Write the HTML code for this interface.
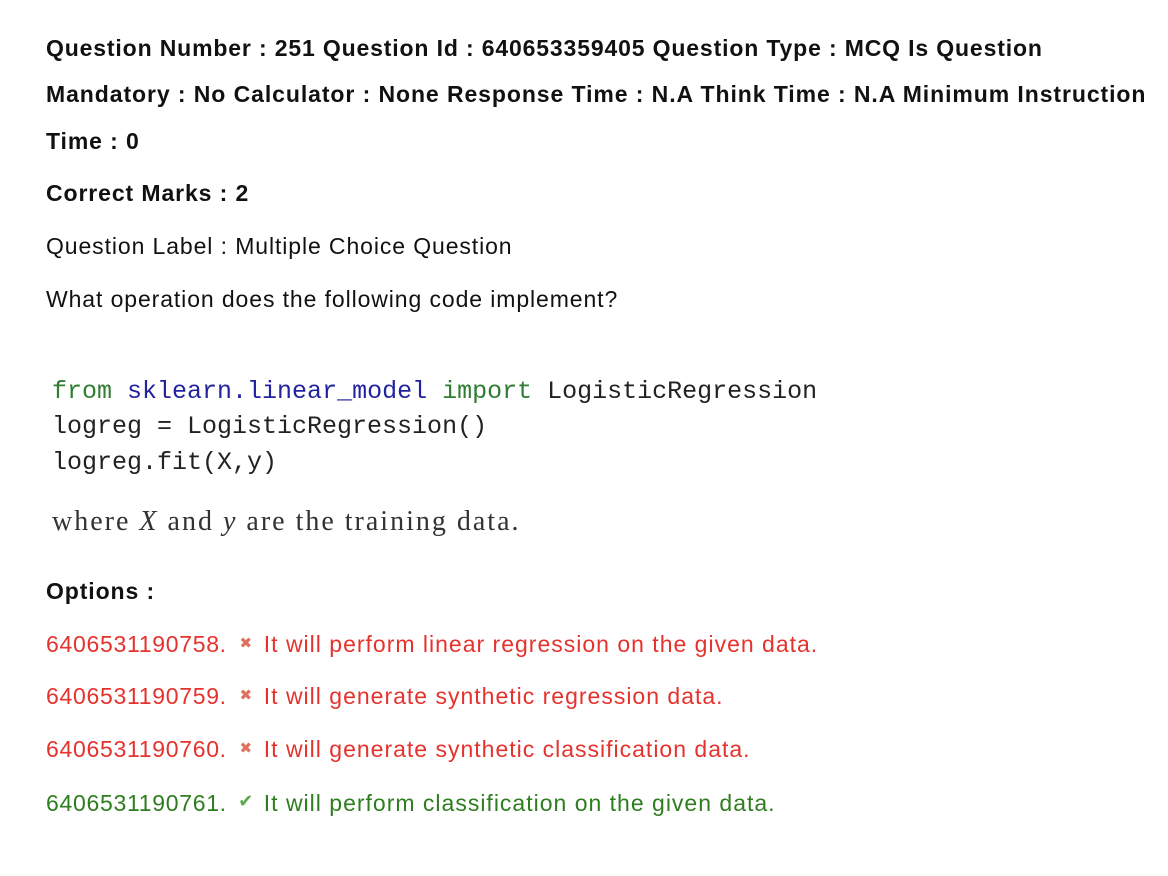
<!DOCTYPE html>
<html><head><meta charset="utf-8"><style>
body{margin:0;width:1168px;height:876px;background:#fff;position:relative;overflow:hidden;font-family:"Liberation Sans",sans-serif;color:#111;}
.l{position:absolute;left:46px;white-space:nowrap;font-size:23px;line-height:30px;letter-spacing:0.9px;}
.b{font-weight:bold;}
.code{position:absolute;left:52px;white-space:nowrap;font-family:"Liberation Mono",monospace;font-size:25px;line-height:30px;color:#222;}
.g{color:#2f7d32}.bl{color:#2323a0}
.r{color:#e5322d}.gr{color:#2e7d1f}
.n{letter-spacing:0.7px}
.ic{display:inline-block;width:18px;text-align:center;font-size:15px;vertical-align:4px;margin:0 9px 0 10px;letter-spacing:0;}
</style></head><body>
<div class="l b" style="top:33px;letter-spacing:0.85px">Question Number : 251 Question Id : 640653359405 Question Type : MCQ Is Question</div>
<div class="l b" style="top:79px;letter-spacing:0.92px">Mandatory : No Calculator : None Response Time : N.A Think Time : N.A Minimum Instruction</div>
<div class="l b" style="top:126px">Time : 0</div>
<div class="l b" style="top:178px">Correct Marks : 2</div>
<div class="l" style="top:231px">Question Label : Multiple Choice Question</div>
<div class="l" style="top:284px">What operation does the following code implement?</div>
<div class="code" style="top:377px"><span class="g">from</span> <span class="bl">sklearn.linear_model</span> <span class="g">import</span> LogisticRegression</div>
<div class="code" style="top:412px">logreg = LogisticRegression()</div>
<div class="code" style="top:448px">logreg.fit(X,y)</div>
<div style="position:absolute;left:52px;top:507px;white-space:nowrap;font-family:'Liberation Serif',serif;font-size:28px;letter-spacing:2px;line-height:30px;color:#333">where <i>X</i> and <i>y</i> are the training data.</div>
<div class="l b" style="top:576px">Options :</div>
<div class="l r" style="top:629px"><span class="n">6406531190758.</span><span class="ic" style="color:#e07060">✖</span><span style="letter-spacing:1px">It will perform linear regression on the given data.</span></div>
<div class="l r" style="top:681px"><span class="n">6406531190759.</span><span class="ic" style="color:#e07060">✖</span><span style="letter-spacing:1px">It will generate synthetic regression data.</span></div>
<div class="l r" style="top:734px"><span class="n">6406531190760.</span><span class="ic" style="color:#e07060">✖</span><span style="letter-spacing:1px">It will generate synthetic classification data.</span></div>
<div class="l gr" style="top:786px"><span class="n">6406531190761.</span><span class="ic" style="color:#5aa84a;font-size:18px">✔</span><span style="letter-spacing:1px">It will perform classification on the given data.</span></div>
</body></html>
